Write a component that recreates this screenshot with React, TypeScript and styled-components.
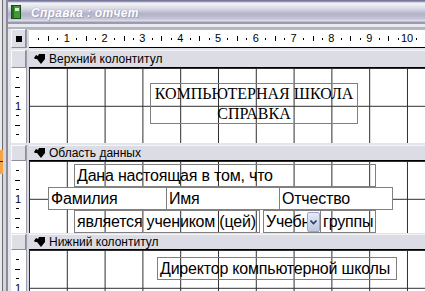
import React from 'react';
import styled, { createGlobalStyle } from 'styled-components';

const CM = 37.8;

const GlobalStyle = createGlobalStyle`
  html, body {
    margin: 0;
    padding: 0;
    background: #e3e3ea;
    overflow: hidden;
  }
`;

const Screen = styled.div`
  display: flex;
  width: 425px;
  height: 291px;
  overflow: hidden;
  font-family: 'Liberation Sans', Arial, sans-serif;
`;

const OuterStrip = styled.div`
  width: 8px;
  flex: none;
  display: flex;
  flex-direction: column;
  background: linear-gradient(
    to right,
    #e8e8ee 0 2px,
    #6b6b6b 2px 3px,
    #d6d6de 3px 6px,
    #8c8c98 6px 8px
  );
`;

const OrangePatch = styled.div`
  margin-top: 150px;
  width: 3px;
  height: 24px;
  background: linear-gradient(to bottom, #f2a446 0 11px, #222 11px 12px, #f2a446 12px);
`;

const Window = styled.div`
  flex: 1;
  display: flex;
  flex-direction: column;
  min-width: 0;
  background: #e3e3ea;
`;

const TitleBar = styled.div`
  height: 24px;
  flex: none;
  display: flex;
  align-items: center;
  gap: 10px;
  padding-left: 3px;
  background: linear-gradient(
    to bottom,
    #76769a 0,
    #76769a 1px,
    #f4f4f8 3px,
    #dcdce8 8px,
    #b2b2c8 14px,
    #c6c6d8 19px,
    #e2e2ec 21px,
    #9a9ab2 22px,
    #9a9ab2 24px
  );
`;

const TitleText = styled.span`
  font: italic bold 12px 'Liberation Sans', Arial, sans-serif;
  color: #fff;
  letter-spacing: 0.3px;
  text-shadow: 1px 1px 0 #a4a4bc, 0 0 1px #9090aa;
  margin-top: 2px;
`;

const FrameGap = styled.div`
  height: 5px;
  flex: none;
  background: linear-gradient(to bottom, #e8e8ef 0 3px, #b4b4bc 3px 5px);
`;

const Body = styled.div`
  flex: 1;
  display: flex;
  flex-direction: column;
  padding-left: 3px;
  min-height: 0;
`;

const Row = styled.div<{ $h: number }>`
  display: flex;
  height: ${p => p.$h}px;
  flex: none;
`;

const CornerButton = styled.div`
  width: 15px;
  flex: none;
  box-sizing: border-box;
  background: #dedee6;
  border: 1px solid;
  border-color: #fafafc #8e8e9a #8e8e9a #fafafc;
  display: flex;
  align-items: center;
  justify-content: center;
`;

const BlackSquare = styled.div`
  width: 6px;
  height: 6px;
  background: #000;
`;

const Separator = styled.div`
  width: 3px;
  flex: none;
  box-sizing: border-box;
  border-left: 1px solid #9c9caa;
  background: #d8d8e0;
`;

const HRuler = styled.div`
  flex: 1;
  box-sizing: border-box;
  background: #fff;
  border-top: 1px solid #b8b8c0;
  border-bottom: 1px solid #000;
  overflow: hidden;
`;

const Gap = styled.div<{ $h: number }>`
  height: ${p => p.$h}px;
  flex: none;
`;

const SectionBar = styled.div`
  flex: 1;
  display: flex;
  align-items: center;
  gap: 4px;
  padding-left: 5px;
  box-sizing: border-box;
  background: #dcdce4;
  border-top: 1px solid #f4f4f8;
  border-bottom: 1px solid #000;
  font-size: 12px;
  color: #000;
`;

const VRuler = styled.div`
  width: 15px;
  flex: none;
  background: #fff;
  overflow: hidden;
`;

const Canvas = styled.div`
  flex: 1;
  position: relative;
  overflow: hidden;
  background-color: #fff;
  background-image: linear-gradient(to right, #2e2e2e 1px, transparent 1px),
    linear-gradient(to bottom, #2e2e2e 1px, transparent 1px);
  background-size: ${CM}px ${CM}px;
`;

const Field = styled.div<{ $x: number; $y: number; $w: number; $opaque?: boolean }>`
  position: absolute;
  left: ${p => p.$x}px;
  top: ${p => p.$y}px;
  width: ${p => p.$w}px;
  height: 23px;
  box-sizing: border-box;
  border: 1px solid #808080;
  background: ${p => (p.$opaque ? '#fff' : 'transparent')};
  font: 16px 'Liberation Sans', Arial, sans-serif;
  letter-spacing: -0.2px;
  line-height: 22px;
  padding-left: 2px;
  white-space: nowrap;
  overflow: hidden;
  color: #000;
`;

const TitleBox = styled.div`
  position: absolute;
  left: 121px;
  top: 15px;
  width: 208px;
  height: 41px;
  box-sizing: border-box;
  border: 1px solid #808080;
  font: 16px 'Liberation Serif', 'Times New Roman', serif;
  line-height: 20px;
  text-align: center;
  color: #000;
`;

const Combo = styled(Field)`
  padding-right: 14px;
`;

const DropButton = styled.div`
  position: absolute;
  right: 0;
  top: 1px;
  width: 13px;
  height: 20px;
  box-sizing: border-box;
  border: 1px solid #9aa6c6;
  border-radius: 2px;
  background: linear-gradient(to bottom, #e6ebf8, #bcc7e2);
  display: flex;
  align-items: center;
  justify-content: center;
`;

const SectionIcon = () => (
  <svg width="11" height="10" viewBox="0 0 11 10">
    <path d="M0 4 L2 1 L4 2 L5 0 L11 0 L11 5 L7 10 L3 5 L1 5 Z" fill="#000" />
  </svg>
);

const BookIcon = () => (
  <svg width="10" height="14" viewBox="0 0 10 14">
    <rect x="0.5" y="0.5" width="9" height="13" fill="#3f9a3a" stroke="#1c4e1a" />
    <rect x="1" y="1" width="2" height="12" fill="#2a6a27" />
    <rect x="4" y="3" width="4" height="3" fill="#d8f0c8" />
  </svg>
);

const RulerMarks = () => {
  const marks: React.ReactNode[] = [];
  for (let i = 1; i <= 43; i++) {
    const x = (i * CM) / 4;
    if (i % 4 === 0) {
      marks.push(
        <text key={i} x={x} y={12} fontSize="11" textAnchor="middle" fontFamily="Liberation Sans, Arial, sans-serif">
          {i / 4}
        </text>
      );
    } else if (i % 2 === 0) {
      marks.push(<rect key={i} x={Math.round(x)} y={6} width={1} height={5} fill="#000" />);
    } else {
      marks.push(<rect key={i} x={Math.round(x)} y={8} width={1} height={2} fill="#000" />);
    }
  }
  return (
    <svg width="400" height="16">
      {marks}
    </svg>
  );
};

const VRulerMarks = ({ height }: { height: number }) => {
  const marks: React.ReactNode[] = [];
  for (let i = 1; i * (CM / 4) < height - 2; i++) {
    const y = (i * CM) / 4;
    if (i % 4 === 0) {
      if (y + 5 <= height) {
        marks.push(
          <text key={i} x={7} y={y + 4} fontSize="11" textAnchor="middle" fontFamily="Liberation Sans, Arial, sans-serif">
            {i / 4}
          </text>
        );
      }
    } else if (i % 2 === 0) {
      marks.push(<rect key={i} x={4} y={Math.round(y)} width={5} height={1} fill="#000" />);
    } else {
      marks.push(<rect key={i} x={5} y={Math.round(y)} width={3} height={1} fill="#000" />);
    }
  }
  return (
    <svg width="15" height={height}>
      {marks}
    </svg>
  );
};

interface SectionProps {
  title: string;
  gap: number;
  barHeight: number;
  height: number;
  children?: React.ReactNode;
}

const Section = ({ title, gap, barHeight, height, children }: SectionProps) => (
  <>
    <Gap $h={gap} />
    <Row $h={barHeight}>
      <CornerButton />
      <Separator />
      <SectionBar>
        <SectionIcon />
        <span>{title}</span>
      </SectionBar>
    </Row>
    <Row $h={height}>
      <VRuler>
        <VRulerMarks height={height} />
      </VRuler>
      <Separator />
      <Canvas>{children}</Canvas>
    </Row>
  </>
);

export default function App() {
  return (
    <Screen>
      <GlobalStyle />
      <OuterStrip>
        <OrangePatch />
      </OuterStrip>
      <Window>
        <TitleBar>
          <BookIcon />
          <TitleText>Справка : отчет</TitleText>
        </TitleBar>
        <FrameGap />
        <Body>
          <Row $h={19}>
            <CornerButton>
              <BlackSquare />
            </CornerButton>
            <Separator />
            <HRuler>
              <RulerMarks />
            </HRuler>
          </Row>
          <Section title="Верхний колонтитул" gap={2} barHeight={18} height={75}>
            <TitleBox>
              КОМПЬЮТЕРНАЯ ШКОЛА
              <br />
              СПРАВКА
            </TitleBox>
          </Section>
          <Section title="Область данных" gap={2} barHeight={16} height={72}>
            <Field $x={45} $y={3} $w={302}>
              Дана настоящая в том, что
            </Field>
            <Field $x={19} $y={26} $w={119} $opaque>
              Фамилия
            </Field>
            <Field $x={137} $y={26} $w={114} $opaque>
              Имя
            </Field>
            <Field $x={250} $y={26} $w={114} $opaque>
              Отчество
            </Field>
            <Field $x={45} $y={49} $w={186}>
              является учеником (цей)
            </Field>
            <Combo $x={234} $y={49} $w={58}>
              Учебн
              <DropButton>
                <svg width="7" height="5" viewBox="0 0 7 5">
                  <path d="M0.5 0.5 L3.5 3.5 L6.5 0.5" fill="none" stroke="#2e3f66" strokeWidth="1.6" />
                </svg>
              </DropButton>
            </Combo>
            <Field $x={291} $y={49} $w={56}>
              группы
            </Field>
          </Section>
          <Section title="Нижний колонтитул" gap={1} barHeight={16} height={60}>
            <Field $x={128} $y={7} $w={240}>
              Директор компьютерной школы
            </Field>
          </Section>
        </Body>
      </Window>
    </Screen>
  );
}
